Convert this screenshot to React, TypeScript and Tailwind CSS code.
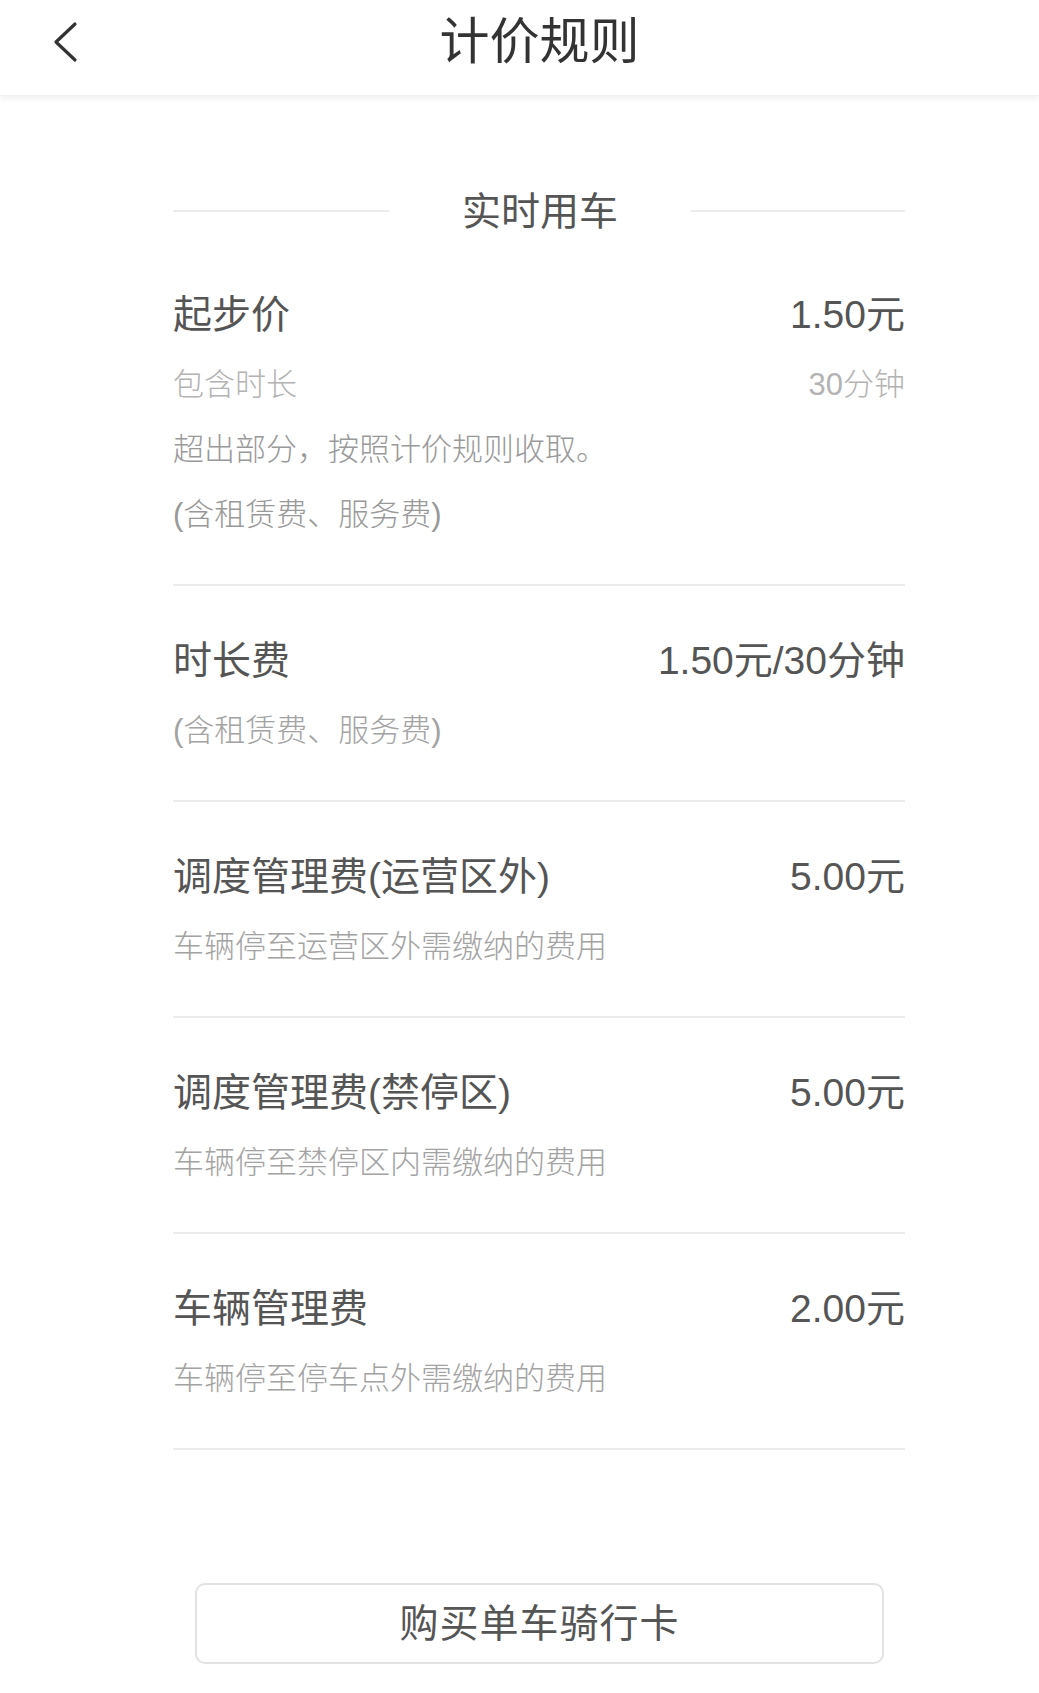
import React from "react";

const FONT = { fontFamily: '"Liberation Sans", "Noto Sans CJK SC", sans-serif' };

type Fee = { name: string; price: string; desc: string };

const fees: Fee[] = [
  { name: "时长费", price: "1.50元/30分钟", desc: "(含租赁费、服务费)" },
  { name: "调度管理费(运营区外)", price: "5.00元", desc: "车辆停至运营区外需缴纳的费用" },
  { name: "调度管理费(禁停区)", price: "5.00元", desc: "车辆停至禁停区内需缴纳的费用" },
  { name: "车辆管理费", price: "2.00元", desc: "车辆停至停车点外需缴纳的费用" },
];

export default function App() {
  return (
    <div className="bg-white min-h-[1693px] w-[1039px] flex flex-col" style={FONT}>
      <Header />
      <main className="pl-[173px] pr-[134px] flex flex-col">
        <SectionTitle />
        <BaseFare />
        {fees.map((f) => (
          <FeeRow key={f.name} fee={f} />
        ))}
        <div className="flex justify-center pt-[133px] pl-[22px] pr-[21px]">
          <button className="w-full h-[81px] rounded-[10px] border-2 border-[#e2e2e2] bg-white text-[39px] text-[#555] tracking-[1px] leading-none">
            购买单车骑行卡
          </button>
        </div>
      </main>
    </div>
  );
}

// ----- Header -----
function Header() {
  return (
    <header className="relative h-[96px] flex items-center justify-center bg-white shadow-[0_3px_6px_rgba(0,0,0,0.06)] border-b border-[#f0f0f0]">
      <svg className="absolute left-[48px] top-[18px]" width="36" height="48" viewBox="0 0 36 48" fill="none">
        <path d="M27 6 L8 24 L27 42" stroke="#333" strokeWidth="3.2" strokeLinecap="round" strokeLinejoin="round" />
      </svg>
      <h1 className="text-[50px] text-[#333] leading-none -mt-[12px] pl-[40px]">计价规则</h1>
    </header>
  );
}

// ----- Section title with side lines -----
function SectionTitle() {
  return (
    <div className="flex items-center mt-[67px] h-[96px]">
      <div className="w-[216px] h-[2px] bg-[#ececec]" />
      <div className="flex-1 text-center text-[39px] text-[#555] leading-none">实时用车</div>
      <div className="w-[214px] h-[2px] bg-[#ececec]" />
    </div>
  );
}

// ----- First block: base fare -----
function BaseFare() {
  return (
    <div className="flex flex-col border-b-2 border-[#ececec] pt-[33px] pb-[50px]">
      <div className="flex justify-between items-center h-[44px] text-[39px] text-[#555] leading-none">
        <span>起步价</span>
        <span>1.50元</span>
      </div>
      <div className="flex justify-between items-center h-[40px] mt-[28px] text-[31px] text-[#b3b3b3] font-light leading-none">
        <span>包含时长</span>
        <span>30分钟</span>
      </div>
      <div className="h-[40px] mt-[25px] flex items-center text-[31px] text-[#999] font-light leading-none">
        超出部分，按照计价规则收取。
      </div>
      <div className="h-[40px] mt-[25px] flex items-center text-[31px] text-[#999] font-light leading-none">
        (含租赁费、服务费)
      </div>
    </div>
  );
}

// ----- Fee row -----
function FeeRow({ fee }: { fee: Fee }) {
  return (
    <div className="flex flex-col border-b-2 border-[#ececec] pt-[52px] pb-[50px] h-[216px]">
      <div className="flex justify-between items-center h-[44px] text-[39px] text-[#555] leading-none">
        <span>{fee.name}</span>
        <span>{fee.price}</span>
      </div>
      <div className="h-[40px] mt-[28px] flex items-center text-[31px] text-[#a3a3a3] font-light leading-none">
        {fee.desc}
      </div>
    </div>
  );
}
